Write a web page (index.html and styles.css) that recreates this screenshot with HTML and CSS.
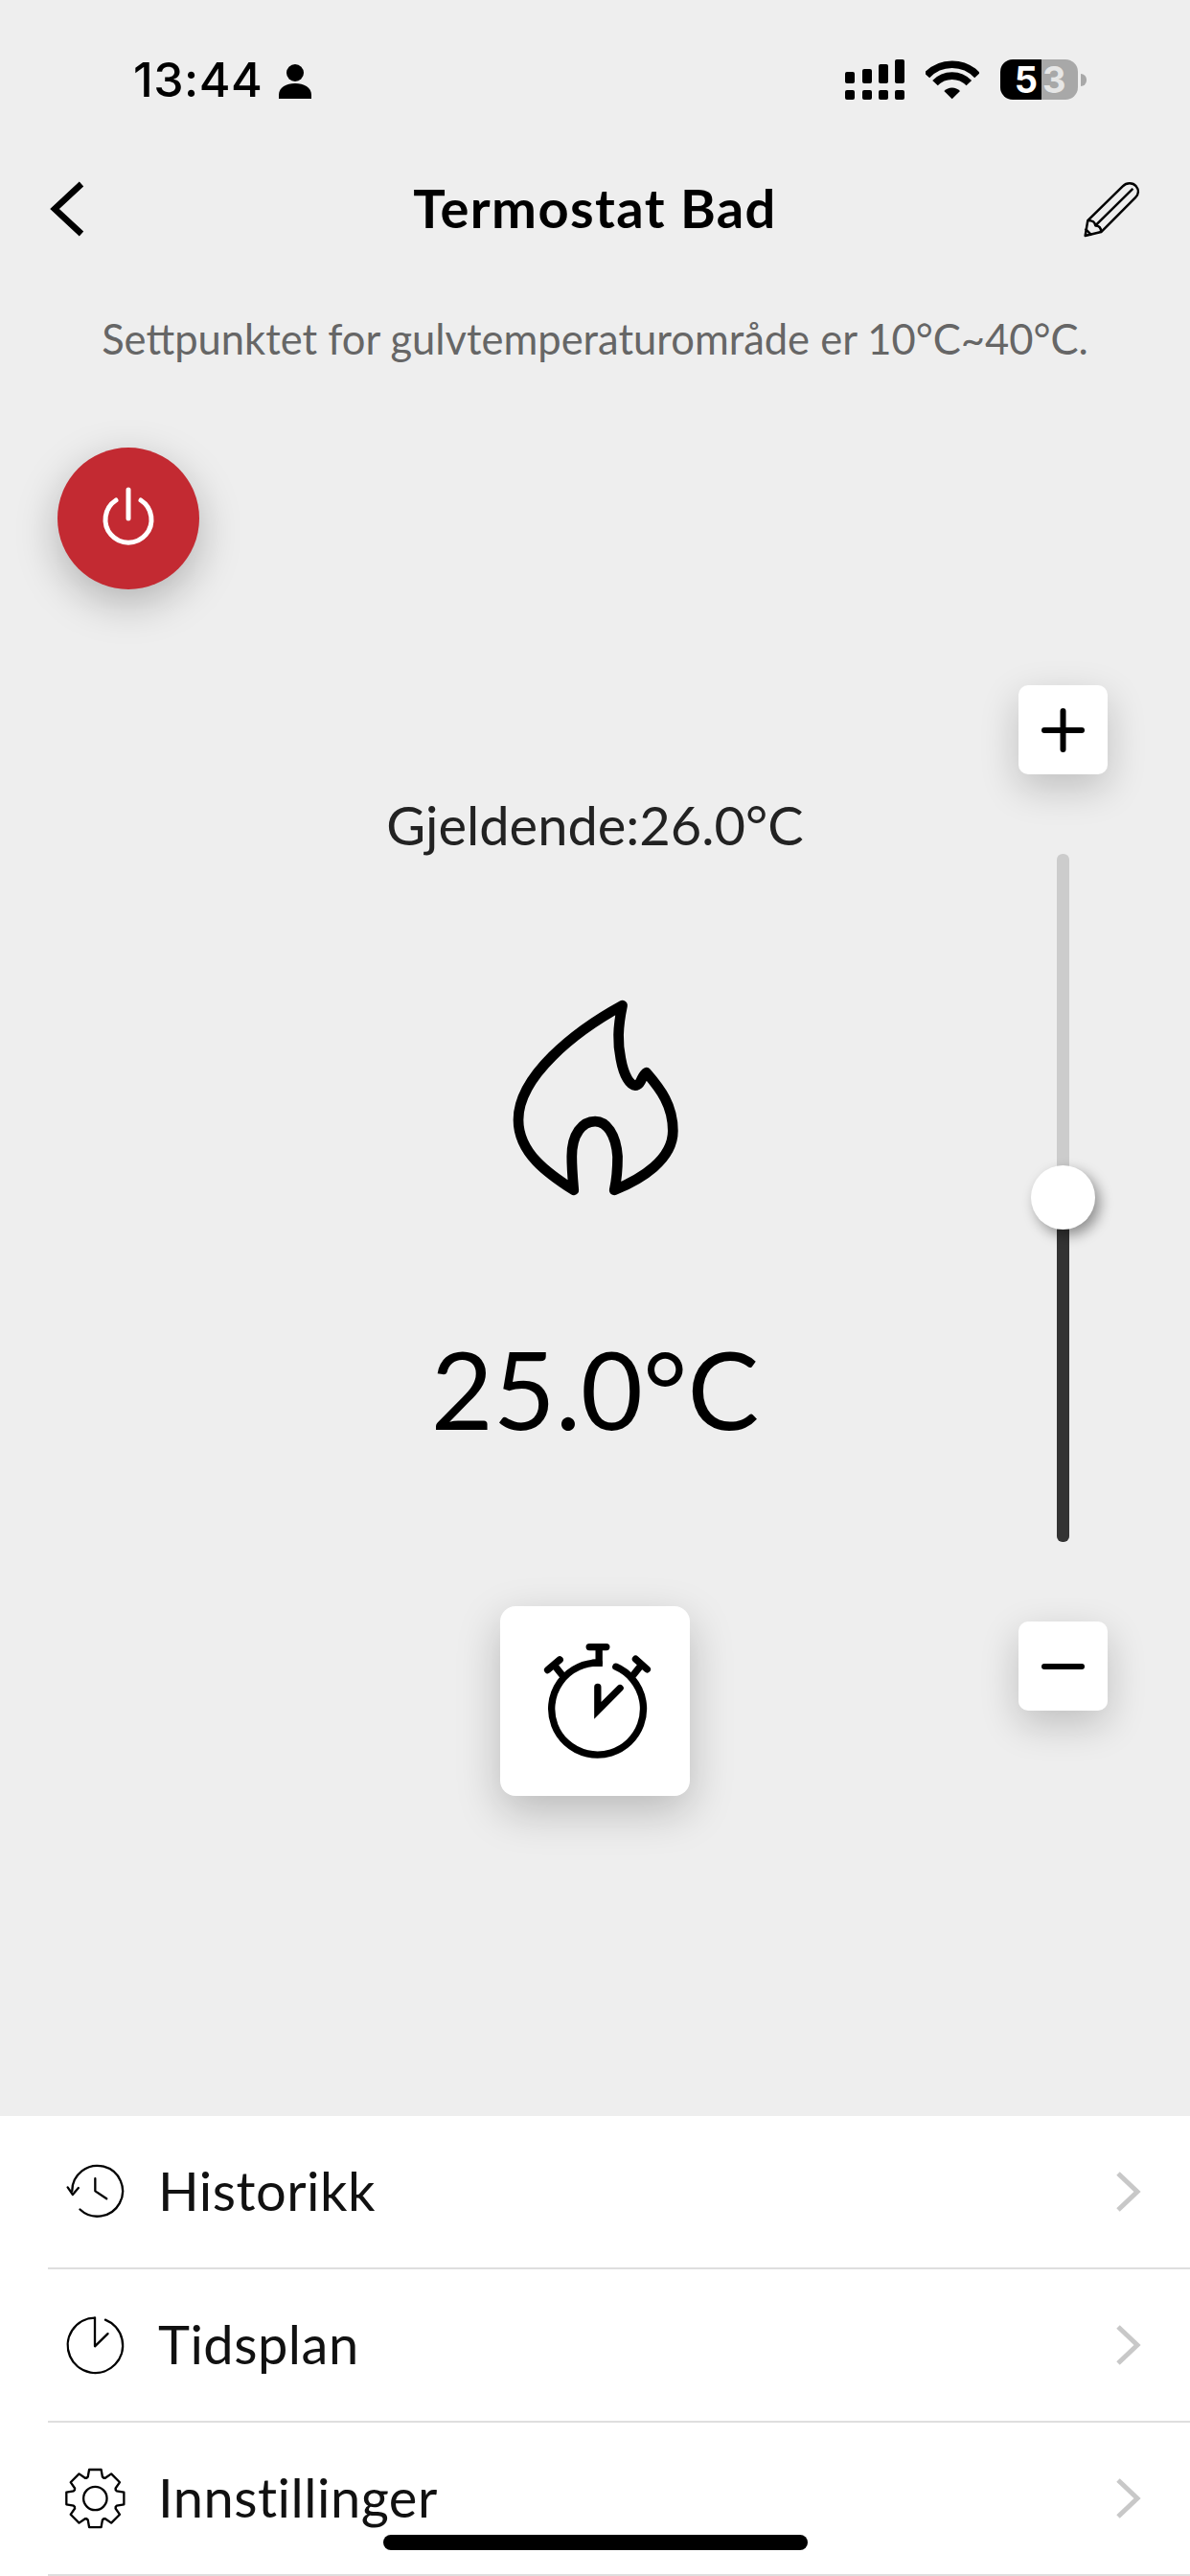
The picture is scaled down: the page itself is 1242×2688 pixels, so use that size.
FILE: index.html

```html
<!DOCTYPE html>
<html>
<head>
    <meta charset="utf-8" />
    <title>Termostat Bad</title>
    <link rel="stylesheet" href="styles.css">
</head>

<body>
<div class="screen">
    <div class="status">
        <span class="time">13:44</span>
        <svg class="person" viewBox="0 0 34 36"><circle cx="17" cy="9" r="9"/><path d="M0 36V32C0 24 8 20 17 20S34 24 34 32V36Z"/></svg>
        <div class="status_right">
            <svg class="signal" viewBox="0 0 62 42">
                <rect x="0" y="13" width="10" height="12" rx="2"/><rect x="18" y="10" width="10" height="15" rx="2"/><rect x="35" y="5" width="10" height="20" rx="2"/><rect x="52" y="0" width="10" height="25" rx="2"/>
                <rect x="0" y="32" width="10" height="10" rx="2"/><rect x="18" y="32" width="10" height="10" rx="2"/><rect x="35" y="32" width="10" height="10" rx="2"/><rect x="52" y="32" width="10" height="10" rx="2"/>
            </svg>
            <svg class="wifi" viewBox="436 66 166 126">
                <path class="wifi_arc" d="M439 116A108 108 0 0 1 597 116"/>
                <path class="wifi_arc" d="M465 140A73 73 0 0 1 571 140"/>
                <path d="M518 190L493 165A35 35 0 0 1 543 165Z"/>
            </svg>
            <div class="battery">
                <span class="batt_full">5</span><span class="batt_empty">3</span>
            </div>
            <span class="batt_cap"></span>
        </div>
    </div>

    <div class="head">
        <svg class="back" viewBox="0 0 40 60"><path d="M35 4L7 30L35 56"/></svg>
        <h1 class="tit">Termostat Bad</h1>
        <svg class="pencil" viewBox="921 440 190 190">
            <path d="M932 618L940 570L1050 462C1062 450 1082 450 1092 462C1102 474 1100 488 1090 498L982 606Z"/>
            <path d="M940 570C956 570 962 574 964 586C976 586 982 592 982 606M964 586L1082 470M932 596L952 616"/>
        </svg>
    </div>

    <p class="hint">Settpunktet for gulvtemperaturområde er 10°C~40°C.</p>

    <button class="power">
        <svg viewBox="0 0 60 66"><path d="M17 14A24 24 0 1 0 43 14M30 3V33"/></svg>
    </button>

    <div class="stage">
        <div class="center">
            <p class="current">Gjeldende:26.0°C</p>
            <svg class="flame" viewBox="170 100 512 610">
                <path d="M358 695C280 645 185 580 185 475C185 340 360 200 510 118C495 190 495 235 505 285C515 340 535 368 550 368C570 368 570 335 585 328C630 380 668 430 668 510C668 600 570 660 485 695C495 650 495 625 495 590C490 520 460 480 425 480C385 480 352 520 352 590C352 630 355 660 358 695Z"/>
            </svg>
            <p class="setpoint">25.0°C</p>
            <button class="timer">
                <svg viewBox="127 108 595 595">
                    <path d="M437 286A144 144 0 1 0 490 298"/>
                    <path d="M437 240V286H420M407 236H460"/>
                    <path d="M320 322L296 292M276 308L314 276"/>
                    <path d="M546 322L570 292M552 274L588 306"/>
                    <path d="M433 362V435L503 365"/>
                </svg>
            </button>
        </div>
        <div class="slider">
            <button class="step">
                <svg viewBox="0 0 45 46"><path d="M3 23H42M22.5 3V43"/></svg>
            </button>
            <div class="track">
                <div class="track_fill" style="height:50%"></div>
                <span class="thumb" style="bottom:50%"></span>
            </div>
            <button class="step">
                <svg viewBox="0 0 45 46"><path d="M3 23H42"/></svg>
            </button>
        </div>
    </div>

    <ul class="menu">
        <li class="menu_row">
            <svg class="menu_icon" viewBox="200 194 200 200">
                <path d="M225 292A80 80 0 1 1 250 350"/>
                <path d="M211 280L227 303L245 282"/>
                <path d="M298 252V292L334 316"/>
            </svg>
            <span class="menu_text">Historikk</span>
            <svg class="menu_more" viewBox="0 0 26 42"><path d="M2 2L22 21L2 40"/></svg>
        </li>
        <li class="menu_row">
            <svg class="menu_icon" viewBox="200 671 200 200">
                <path d="M297 685A87 87 0 1 0 330 691"/>
                <path d="M297 685V775L338 735"/>
            </svg>
            <span class="menu_text">Tidsplan</span>
            <svg class="menu_more" viewBox="0 0 26 42"><path d="M2 2L22 21L2 40"/></svg>
        </li>
        <li class="menu_row">
            <svg class="menu_icon" viewBox="-98 -100 200 200">
                <defs><path id="tooth" d="M-27 -65L-23 -68L-19 -91H19L23 -68L27 -65"/></defs>
                <circle r="37"/>
                <use href="#tooth"/>
                <use href="#tooth" transform="rotate(45)"/>
                <use href="#tooth" transform="rotate(90)"/>
                <use href="#tooth" transform="rotate(135)"/>
                <use href="#tooth" transform="rotate(180)"/>
                <use href="#tooth" transform="rotate(225)"/>
                <use href="#tooth" transform="rotate(270)"/>
                <use href="#tooth" transform="rotate(315)"/>
            </svg>
            <span class="menu_text">Innstillinger</span>
            <svg class="menu_more" viewBox="0 0 26 42"><path d="M2 2L22 21L2 40"/></svg>
        </li>
    </ul>

    <span class="home_bar"></span>
</div>
</body>
</html>
```

FILE: styles.css

```css
* {box-sizing:border-box;}
body {margin:0;background-color:#EEEEEE;font-family:Lato, "Open Sans", sans-serif;color:#000000;}
p, h1, ul {margin:0;padding:0;}
button {display:block;padding:0;border:0 none;background:none;}
svg {display:block;}

.screen {position:relative;display:flex;flex-direction:column;width:1242px;height:2688px;overflow:hidden;}

/* status bar */
.status {display:flex;align-items:center;height:42px;margin-top:62px;padding:0 108px 0 139px;}
.time {font:500 50px/42px Inter, sans-serif;letter-spacing:.5px;}
.person {width:34px;height:36px;margin:4px 0 0 17px;}
.status_right {display:flex;align-items:center;margin-left:auto;}
.signal {width:62px;height:42px;margin-right:22px;}
.wifi {width:56px;height:42px;margin-right:22px;}
.wifi_arc {fill:none;stroke:#000000;stroke-width:23;}
.battery {display:flex;width:81px;height:42px;font:700 38px/42px Inter, sans-serif;}
.batt_full {width:43px;padding-right:4px;border-radius:13px 0 0 13px;text-align:right;color:#FFFFFF;background-color:#000000;}
.batt_empty {flex:1;padding-left:1px;border-radius:0 13px 13px 0;color:#E6E6E6;background-color:#A8A8A8;}
.batt_cap {width:6px;height:13px;margin-left:3px;border-radius:0 6px 6px 0;background-color:#A8A8A8;}

/* title */
.head {display:grid;grid-template-columns:1fr auto 1fr;align-items:center;height:100px;margin-top:64px;padding:0 50px;}
.back {width:40px;height:60px;fill:none;stroke:#000000;stroke-width:6.5;}
.tit {margin-top:-2px;font-size:56px;line-height:60px;font-weight:700;letter-spacing:1.4px;}
.pencil {justify-self:end;width:63px;height:63px;fill:none;stroke:#000000;stroke-width:7.5;stroke-linejoin:round;}

.hint {margin-top:55px;font-size:43.5px;line-height:60px;text-align:center;color:#666666;}

.power {display:flex;align-items:center;justify-content:center;width:148px;height:148px;margin:84px 0 100px 60px;border-radius:50%;background-color:#C32A32;box-shadow:0 14px 44px rgba(0,0,0,.25);}
.power svg {width:60px;height:66px;fill:none;stroke:#FFFFFF;stroke-width:5;stroke-linecap:round;}

/* middle part */
.stage {flex:1;display:grid;grid-template-columns:179px 1fr 93px 86px;}
.center {grid-column:2;display:flex;flex-direction:column;align-items:center;}
.current {margin-top:116px;font-size:56px;line-height:60px;color:#222222;}
.flame {width:171px;height:204px;margin-top:152px;overflow:visible;fill:none;stroke:#000000;stroke-width:32;stroke-linejoin:round;}
.setpoint {margin-top:137px;font-size:112px;line-height:130px;}
.timer {width:198px;height:198px;margin-top:162px;border-radius:16px;background-color:#FFFFFF;box-shadow:0 16px 46px rgba(0,0,0,.22);}
.timer svg {width:198px;height:198px;fill:none;stroke:#000000;stroke-width:22;stroke-linecap:round;}

.slider {grid-column:3;display:flex;flex-direction:column;align-items:center;}
.step {display:flex;align-items:center;justify-content:center;width:93px;height:93px;border-radius:10px;background-color:#FFFFFF;box-shadow:0 14px 40px rgba(0,0,0,.2);}
.step svg {width:45px;height:46px;fill:none;stroke:#000000;stroke-width:6;stroke-linecap:round;}
.track {position:relative;display:flex;align-items:flex-end;width:13px;height:718px;margin:83px 0;border-radius:6px;background-color:#CCCCCC;}
.track_fill {width:100%;border-radius:0 0 6px 6px;background-color:#333333;}
.thumb {position:absolute;left:-27px;width:67px;height:67px;margin-bottom:-33px;border-radius:50%;background-color:#FFFFFF;box-shadow:5px 6px 14px rgba(0,0,0,.4);}

/* list at the bottom */
.menu {list-style:none;background-color:#FFFFFF;}
.menu_row {display:flex;align-items:center;height:160px;margin-left:50px;padding-right:51px;border-bottom:2px solid #DEDEDE;}
.menu_icon {width:66px;height:66px;margin-left:17px;fill:none;stroke:#000000;stroke-width:7;stroke-linecap:round;stroke-linejoin:round;}
.menu_text {margin:-3px 0 0 32px;font-size:56px;line-height:70px;letter-spacing:.5px;color:#111111;}
.menu_more {width:26px;height:42px;margin-left:auto;fill:none;stroke:#C8C8C8;stroke-width:5;}

.home_bar {position:absolute;left:400px;bottom:27px;width:443px;height:16px;border-radius:8px;background-color:#000000;}
```
